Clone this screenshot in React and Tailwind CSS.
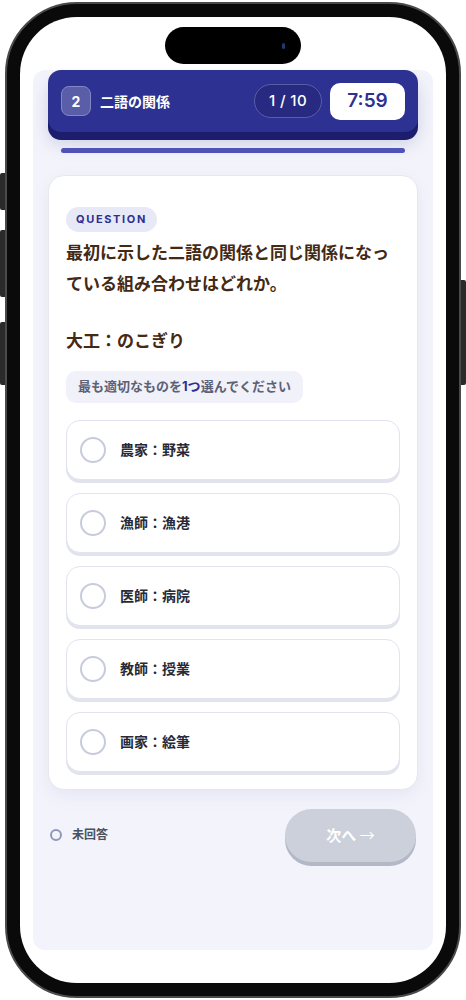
import React, { useState } from 'react';

const options = [
  { id: 'a', label: '農家：野菜' },
  { id: 'b', label: '漁師：漁港' },
  { id: 'c', label: '医師：病院' },
  { id: 'd', label: '教師：授業' },
  { id: 'e', label: '画家：絵筆' },
];

const font = { fontFamily: 'Inter, "Noto Sans CJK JP", sans-serif' };

function Header() {
  return (
    <div className="rounded-[13px] bg-[#2d3191] shadow-[0_8px_0_#1c1d6c,0_12px_18px_rgba(40,44,120,0.18)] h-[62px] px-[13px] flex items-center">
      <div className="w-[30px] h-[30px] rounded-[8px] bg-[#5a5ea8] border border-[#8487c4] flex items-center justify-center text-white text-[14px] font-bold">
        2
      </div>
      <div className="ml-[9px] text-white text-[14px] font-bold">二語の関係</div>
      <div className="ml-auto h-[34px] px-[14px] rounded-full border border-[#5a5ea8] bg-[#272a80] flex items-center text-white text-[15px] font-medium tracking-wide">
        1 / 10
      </div>
      <div className="ml-[8px] w-[75px] h-[37px] rounded-[10px] bg-white flex items-center justify-center text-[#2d3191] text-[19px] font-semibold">
        7:59
      </div>
    </div>
  );
}

function Option({ label, selected, onClick }) {
  return (
    <button
      onClick={onClick}
      className="w-full h-[60px] rounded-[14px] bg-white border border-[#e1e3ee] shadow-[0_3px_0_#e2e4ed] flex items-center px-[13px] text-left"
    >
      <span
        className={
          selected
            ? 'w-[26px] h-[26px] rounded-full border-[2px] border-[#2d3191] flex items-center justify-center'
            : 'w-[26px] h-[26px] rounded-full border-[2px] border-[#c7cbdc]'
        }
      >
        {selected && <span className="w-[12px] h-[12px] rounded-full bg-[#2d3191]" />}
      </span>
      <span className="ml-[14px] text-[14px] font-bold text-[#272a36]">{label}</span>
    </button>
  );
}

export default function App() {
  const [picked, setPicked] = useState(null);

  return (
    <div className="w-[466px] h-[1000px] bg-white relative overflow-hidden" style={font}>
      {/* side buttons */}
      <div className="absolute left-0 top-[173px] w-[5px] h-[37px] rounded-l-[2px] bg-[#2a2a2a]" />
      <div className="absolute left-0 top-[230px] w-[5px] h-[67px] rounded-l-[2px] bg-[#2a2a2a]" />
      <div className="absolute left-0 top-[322px] w-[5px] h-[63px] rounded-l-[2px] bg-[#2a2a2a]" />
      <div className="absolute right-0 top-[280px] w-[5px] h-[105px] rounded-r-[2px] bg-[#2a2a2a]" />

      <div className="ml-[5px] mt-[2px] w-[456px] h-[996px] rounded-[72px] bg-[#0a0a0a] border-[2px] border-[#4a4a4a] p-[13px]">
        <div className="relative w-full h-full rounded-[57px] bg-white pt-[53px] px-[13px]">
          {/* dynamic island */}
          <div className="absolute left-[145px] top-[10px] w-[136px] h-[37px] rounded-full bg-black flex items-center justify-end pr-[16px]">
            <span className="w-[3px] h-[6px] rounded-full bg-[#1d3b6b]" />
          </div>

          <div className="h-[880px] rounded-[12px] bg-[#f3f4fb] px-[15px]">
            <Header />
            <div className="mt-[16px] mx-[13px] h-[5px] rounded-full bg-[#4f53b8]" />

            <div className="mt-[22px] rounded-[16px] bg-white border border-[#e6e8f1] shadow-[0_6px_18px_rgba(60,64,140,0.08)] px-[17px] pt-[29px] pb-[17px]">
              <div className="inline-flex h-[25px] items-center px-[10px] rounded-full bg-[#e8e9f7] text-[#2d3191] text-[11px] font-bold tracking-[0.15em]">
                QUESTION
              </div>
              <p className="mt-[6px] text-[17px] leading-[31px] font-bold text-[#442913]">
                最初に示した二語の関係と同じ関係になっている組み合わせはどれか。
              </p>
              <p className="mt-[26px] text-[17px] leading-[31px] font-bold text-[#442913]">大工：のこぎり</p>
              <div className="mt-[14px] inline-flex h-[32px] items-center px-[12px] rounded-[10px] bg-[#f0f1f9] text-[13px] font-bold text-[#5d6175]">
                最も適切なものを<span className="text-[#2d3191]">1つ</span>選んでください
              </div>
              <div className="mt-[17px] flex flex-col gap-[13px]">
                {options.map((o) => (
                  <Option
                    key={o.id}
                    label={o.label}
                    selected={picked === o.id}
                    onClick={() => setPicked(o.id)}
                  />
                ))}
              </div>
            </div>

            <div className="mt-[19px] flex items-center px-[2px]">
              <span
                className={
                  picked
                    ? 'w-[12px] h-[12px] rounded-full bg-[#2d3191]'
                    : 'w-[12px] h-[12px] rounded-full border-[2px] border-[#8f98b8]'
                }
              />
              <span className="ml-[10px] text-[12px] font-bold text-[#4b5060]">
                {picked ? '回答済み' : '未回答'}
              </span>
              <button
                disabled={!picked}
                className={
                  picked
                    ? 'ml-auto w-[131px] h-[53px] rounded-full bg-[#2d3191] shadow-[0_4px_0_#1c1d6c] text-white text-[15px] font-bold'
                    : 'ml-auto w-[131px] h-[53px] rounded-full bg-[#cbd0db] shadow-[0_4px_0_#b2b8c6] text-white text-[15px] font-bold'
                }
              >
                次へ <span className="font-normal" style={{ fontFamily: '"Noto Sans CJK JP", sans-serif' }}>→</span>
              </button>
            </div>
          </div>
        </div>
      </div>
    </div>
  );
}
